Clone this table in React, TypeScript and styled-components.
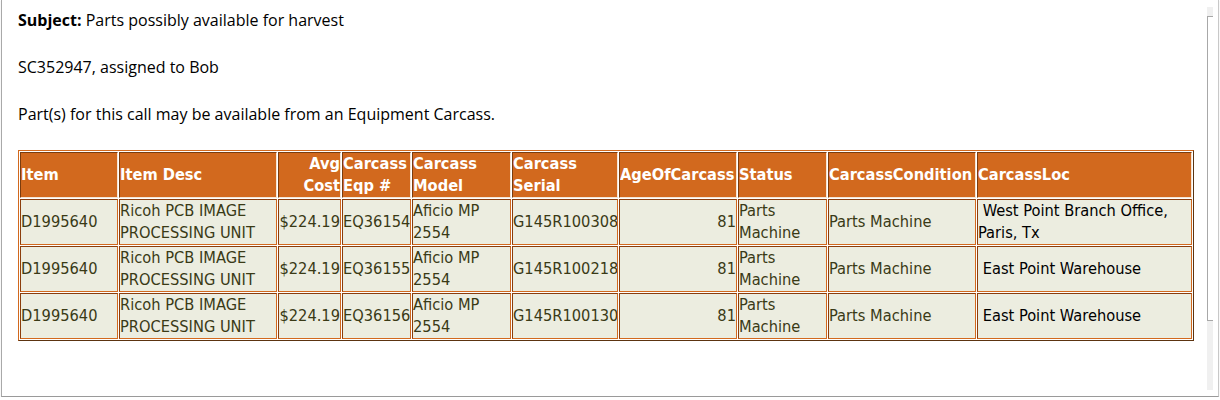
import styled, { createGlobalStyle } from "styled-components"

const GlobalStyle = createGlobalStyle`
  html, body {
    margin:0;
    padding:0;
    background:#ffffff;
  }
`

interface Row {
  item: string
  desc: string
  cost: string
  eqp: string
  model: string
  serial: string
  age: number
  status: string
  condition: string
  loc: string
}

const rows: Row[] = [
  {
    item: "D1995640",
    desc: "Ricoh PCB IMAGE PROCESSING UNIT",
    cost: "$224.19",
    eqp: "EQ36154",
    model: "Aficio MP 2554",
    serial: "G145R100308",
    age: 81,
    status: "Parts Machine",
    condition: "Parts Machine",
    loc: "\u00a0West Point Branch Office, Paris, Tx"
  },
  {
    item: "D1995640",
    desc: "Ricoh PCB IMAGE PROCESSING UNIT",
    cost: "$224.19",
    eqp: "EQ36155",
    model: "Aficio MP 2554",
    serial: "G145R100218",
    age: 81,
    status: "Parts Machine",
    condition: "Parts Machine",
    loc: "\u00a0East Point Warehouse"
  },
  {
    item: "D1995640",
    desc: "Ricoh PCB IMAGE PROCESSING UNIT",
    cost: "$224.19",
    eqp: "EQ36156",
    model: "Aficio MP 2554",
    serial: "G145R100130",
    age: 81,
    status: "Parts Machine",
    condition: "Parts Machine",
    loc: "\u00a0East Point Warehouse"
  }
]

const columns = [98, 158, 63, 69, 99, 106, 118, 89, 148, 215]

export default function App() {
  return (
    <>
      <GlobalStyle />
      <Frame>
        <Message>
          <Line><b>Subject:</b> Parts possibly available for harvest</Line>
          <Line>SC352947, assigned to Bob</Line>
          <Line>Part(s) for this call may be available from an Equipment Carcass.</Line>

          <Table>
            <colgroup>
              {columns.map((w, i) => (
                <col key={i} style={{ width: w }} />
              ))}
            </colgroup>
            <thead>
              <tr>
                <Th>Item</Th>
                <Th>Item Desc</Th>
                <Th $right>Avg Cost</Th>
                <Th>Carcass Eqp #</Th>
                <Th>Carcass Model</Th>
                <Th>Carcass Serial</Th>
                <Th>AgeOfCarcass</Th>
                <Th>Status</Th>
                <Th>CarcassCondition</Th>
                <Th>CarcassLoc</Th>
              </tr>
            </thead>
            <tbody>
              {rows.map((r) => (
                <tr key={r.eqp}>
                  <Td>{r.item}</Td>
                  <Td>{r.desc}</Td>
                  <Td $right>{r.cost}</Td>
                  <Td>{r.eqp}</Td>
                  <Td>{r.model}</Td>
                  <Td>{r.serial}</Td>
                  <Td $right>{r.age}</Td>
                  <Td>{r.status}</Td>
                  <Td>{r.condition}</Td>
                  <Td $dark>{r.loc}</Td>
                </tr>
              ))}
            </tbody>
          </Table>
        </Message>

        <Scrollbar>
          <Thumb />
        </Scrollbar>
      </Frame>
    </>
  )
}

const Frame = styled.div`
  margin-left:1px;
  width:1216px;
  height:396px;
  border-left:1px solid #a9a9a9;
  border-right:1px solid #c8c8c8;
  border-bottom:1px solid #9a9a9a;
  box-shadow:0 1px 1px rgba(0,0,0,0.15);
  display:flex;
  background:#ffffff;
`

const Message = styled.div`
  flex:1;
  padding:9px 0 0 16px;
  font-family:"Open Sans", "Noto Sans", sans-serif;
  font-size:16px;
  color:#000000;
`

const Line = styled.p`
  margin:0 0 25px 0;
  line-height:22px;

  b{
    font-weight:700;
  }
`

const Table = styled.table`
  table-layout:fixed;
  width:1176px;
  border-collapse:separate;
  border-spacing:1px;
  border:1px solid;
  border-color:#d2691e #5c3411 #5c3411 #d2691e;
  font-family:"DejaVu Sans Condensed", "DejaVu Sans", Verdana, sans-serif;
  font-stretch:condensed;
  font-size:16.3px;
  line-height:22px;
`

const Th = styled.th<{ $right?: boolean }>`
  background:#d2691e;
  color:#ffffff;
  font-weight:700;
  font-size:16.3px;
  text-align:${(p) => (p.$right ? "right" : "left")};
  vertical-align:middle;
  padding:0;
  height:43px;
  border:1px solid;
  border-color:#7a3c0e #f4e4d4 #f4e4d4 #7a3c0e;
  overflow:hidden;
`

const Td = styled.td<{ $right?: boolean; $dark?: boolean }>`
  background:#ecede0;
  color:${(p) => (p.$dark ? "#000000" : "#3a3a16")};
  text-align:${(p) => (p.$right ? "right" : "left")};
  vertical-align:middle;
  padding:0;
  height:44px;
  border:1px solid;
  border-color:#8b3d0c #d2691e #d2691e #8b3d0c;
  overflow:hidden;
`

const Scrollbar = styled.div`
  width:6px;
  margin:7px 5px 6px 0;
  background:#f0f0f0;
  display:flex;
  flex-direction:column;
  padding-top:9px;
`

const Thumb = styled.div`
  height:303px;
  background:#ffffff;
  border-left:1px solid #a8a8a8;
  border-top:1px solid #a8a8a8;
  border-bottom:1px solid #a8a8a8;
`
